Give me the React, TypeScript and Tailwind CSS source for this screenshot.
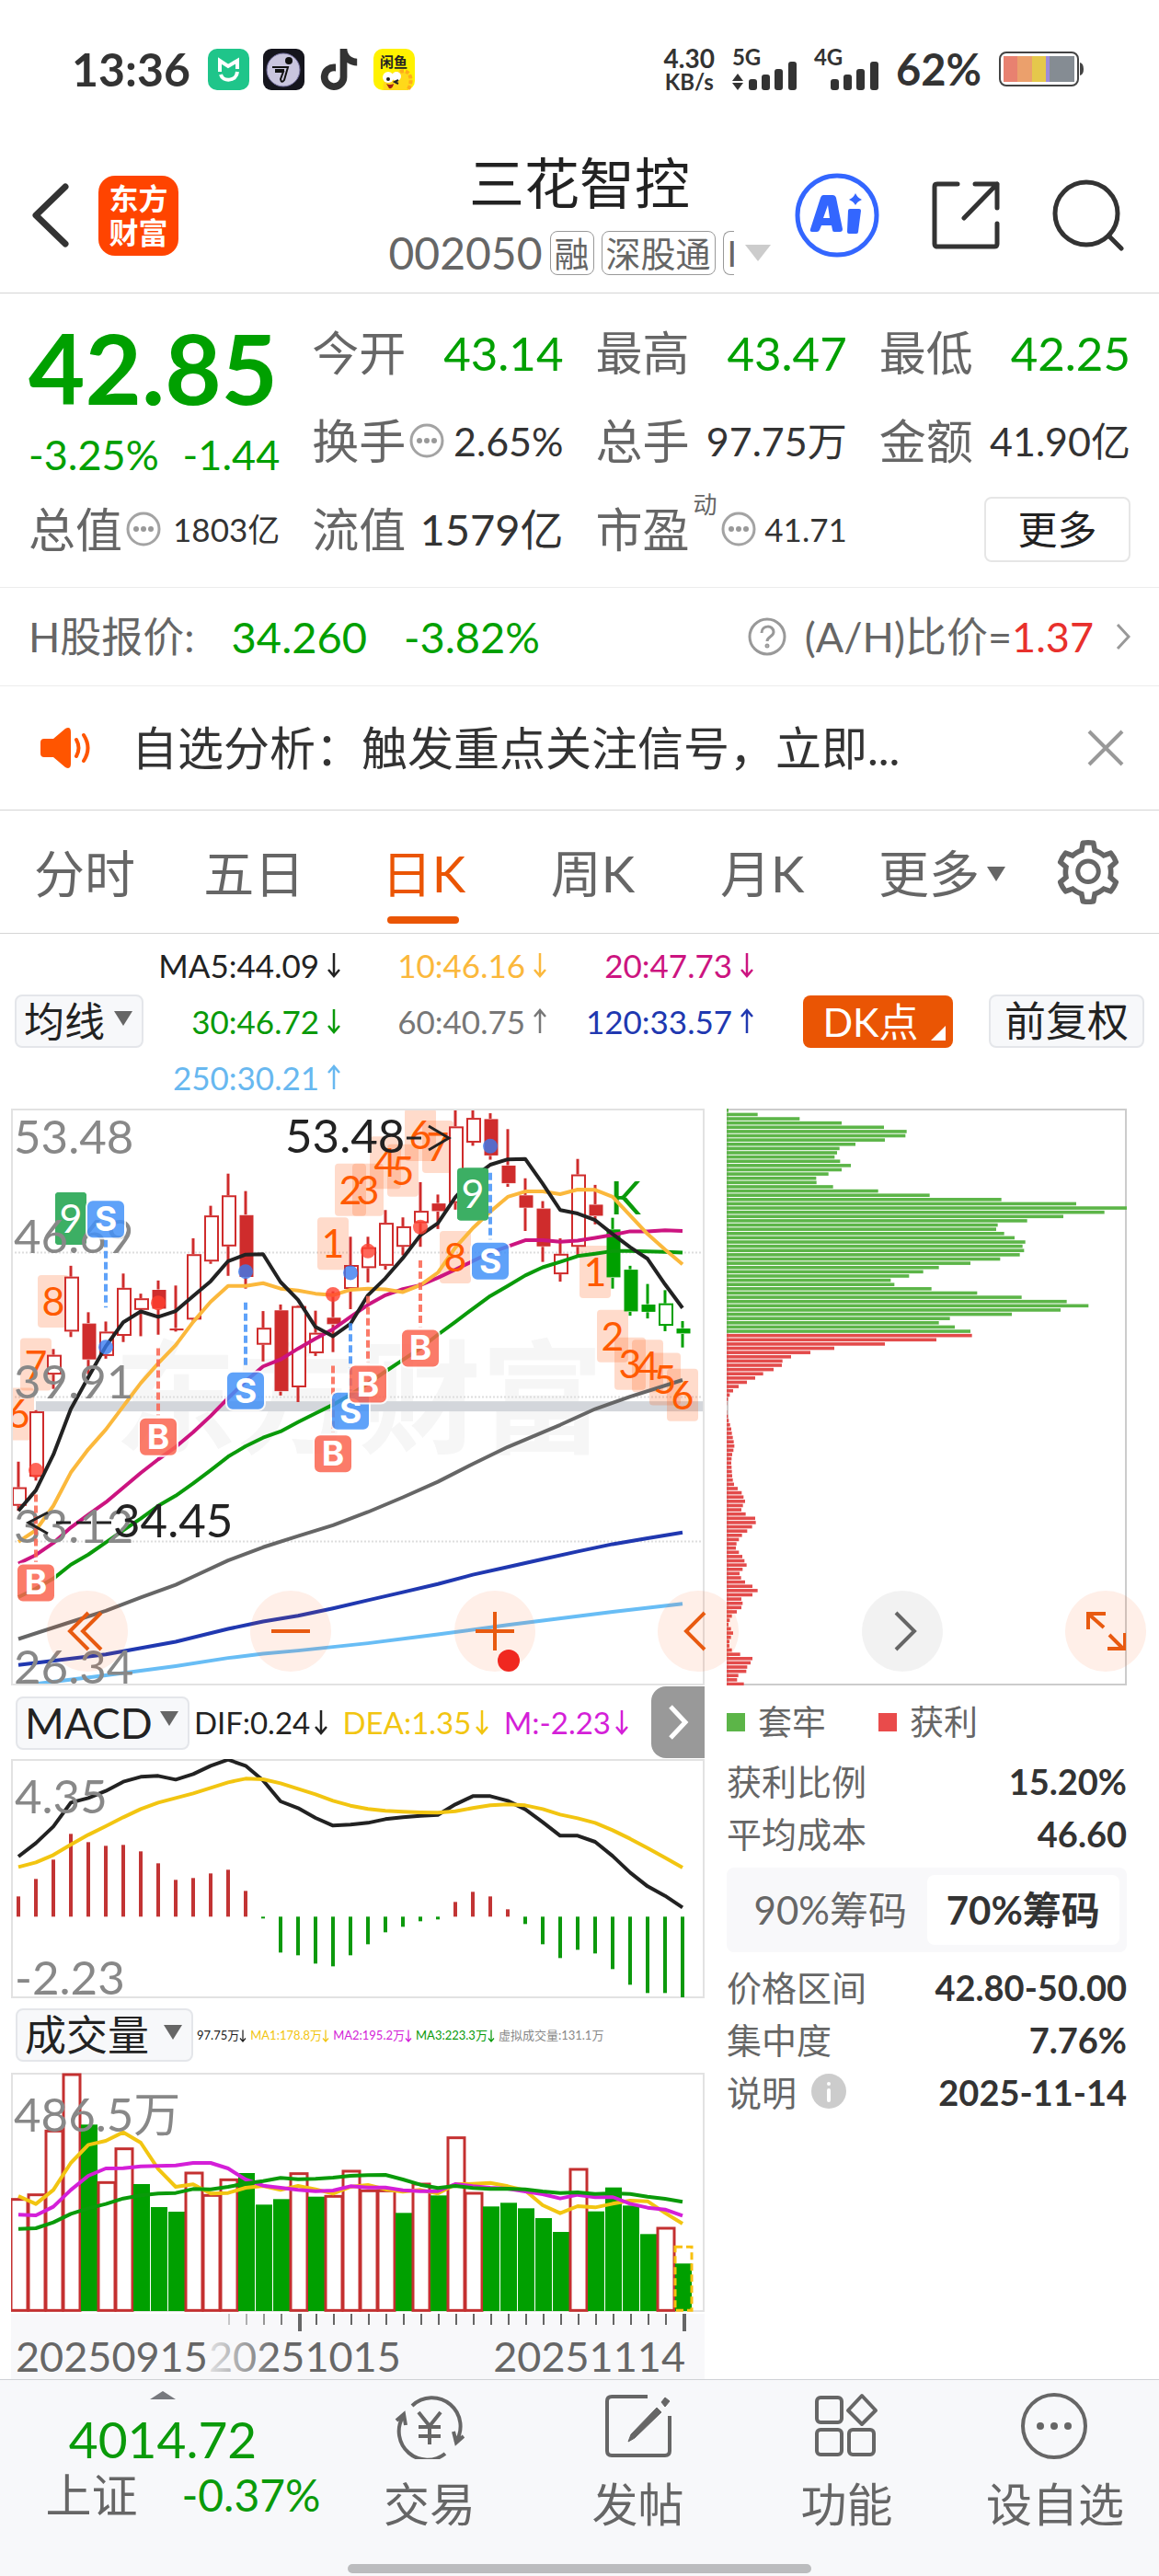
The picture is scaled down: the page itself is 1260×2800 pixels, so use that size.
import React, { useState } from 'react';
import { FaTiktok } from 'react-icons/fa';
import { AiOutlineSetting } from 'react-icons/ai';

// ---------- chart data ----------

const RED = '#cf2c2c';
const GREEN = '#00a000';
const STEP = 19;
const xAt = (i: number) => 8 + STEP * i;

// price levels are stored on a 36 (top) .. 1526 (bottom) scale
const py = (v: number) => ((v - 36) / 1490) * 627;
// indicator panels: three units for one pixel
const my = (v: number) => (v - 248) / 3;
const vy = (v: number) => (v - 218) / 3;

// [high, bodyTop, bodyBottom, low, kind]  u = rising, r = filled red, g = falling, h = hollow green
type Candle = [number, number, number, number, 'u' | 'r' | 'g' | 'h'];
const CANDLES: Candle[] = [
  [948, 1014, 1062, 1075, 'u'], [815, 818, 987, 997, 'u'], [657, 672, 723, 760, 'u'], [442, 470, 612, 626, 'u'],
  [562, 590, 685, 722, 'r'], [586, 612, 675, 682, 'u'], [462, 499, 623, 639, 'u'], [514, 526, 556, 624, 'u'],
  [480, 503, 554, 620, 'r'], [493, 603, 607, 612, 'r'], [371, 412, 581, 585, 'u'], [287, 312, 431, 437, 'u'],
  [204, 260, 392, 468, 'u'], [249, 310, 472, 501, 'r'], [559, 602, 646, 689, 'u'], [542, 556, 767, 777, 'r'],
  [544, 546, 756, 794, 'u'], [558, 615, 668, 675, 'u'], [508, 575, 594, 665, 'r'], [367, 440, 502, 554, 'u'],
  [367, 394, 448, 485, 'u'], [298, 331, 442, 452, 'u'], [317, 340, 393, 415, 'u'], [226, 300, 332, 393, 'u'],
  [258, 280, 302, 347, 'r'], [36, 82, 280, 297, 'u'], [40, 60, 124, 132, 'u'], [48, 62, 158, 168, 'r'],
  [89, 182, 230, 238, 'r'], [216, 259, 293, 352, 'r'], [275, 293, 393, 432, 'r'], [371, 411, 464, 483, 'u'],
  [166, 206, 393, 415, 'u'], [233, 283, 314, 335, 'r'], [318, 347, 473, 501, 'g'], [442, 451, 561, 571, 'g'],
  [489, 541, 562, 578, 'g'], [505, 539, 597, 611, 'h'], [585, 603, 618, 653, 'g'],
];

const MA5 = [1075, 1022, 930, 812, 730, 650, 588, 560, 574, 559, 520, 482, 430, 413, 412, 484, 530, 600, 624, 592, 518, 474, 422, 363, 332, 265, 215, 181, 167, 166, 230, 298, 307, 324, 360, 394, 424, 490, 551];
const MA10 = [1155, 1125, 1062, 976, 916, 865, 805, 745, 694, 647, 587, 535, 494, 494, 487, 501, 506, 514, 518, 504, 501, 503, 510, 492, 460, 395, 345, 302, 264, 250, 250, 257, 245, 246, 264, 312, 360, 400, 438];
const MA20 = [1211, 1189, 1158, 1118, 1085, 1053, 1015, 977, 942, 910, 872, 830, 784, 740, 702, 684, 656, 630, 606, 574, 543, 518, 502, 492, 473, 452, 430, 408, 392, 376, 376, 380, 377, 370, 362, 353, 353, 350, 352];
const MA30 = [1298, 1276, 1250, 1214, 1188, 1157, 1125, 1095, 1062, 1036, 1004, 970, 935, 908, 886, 870, 846, 823, 801, 775, 746, 715, 685, 655, 620, 587, 553, 520, 494, 467, 446, 432, 417, 411, 404, 404, 405, 406, 408];

// slow averages only need a few knots: [candle index, level]
const MA60 = [[0, 1406], [3, 1362], [5, 1333], [7, 1299], [9, 1266], [10, 1245], [12, 1203], [14, 1169], [16, 1140], [18, 1112], [20, 1078], [22, 1040], [24, 1000], [26, 954], [28, 910], [30, 872], [31, 853], [33, 812], [35, 780], [38, 737]];
const MA120 = [[0, 1473], [5, 1446], [9, 1413], [12, 1380], [14, 1361], [16, 1346], [18, 1327], [20, 1306], [22, 1285], [24, 1264], [26, 1240], [28, 1220], [30, 1200], [32, 1180], [34, 1161], [36, 1146], [38, 1131]];
const MA250 = [[0, 1526], [1, 1522], [5, 1500], [9, 1476], [12, 1455], [14, 1444], [16, 1436], [20, 1417], [24, 1394], [28, 1370], [32, 1347], [34, 1336], [38, 1315]];

// nine-turn counters: [candle index, top level, digit]
const TURNS = [[0, 757, 6], [1, 629, 7], [2, 466, 8], [3, 252, 9], [18, 317, 1], [19, 178, 2], [20, 178, 3], [21, 108, 4], [22, 128, 5], [23, 36, 6], [24, 67, 7], [25, 352, 8], [26, 189, 9], [33, 390, 1], [34, 556, 2], [35, 627, 3], [36, 633, 4], [37, 667, 5], [38, 708, 6]];

// trade marks: [side, candle index, badge centre, dash from, dash to, dot]
type Mark = ['B' | 'S', number, number, number, number, number];
const MARKS: Mark[] = [
  ['B', 1, 1261, 1033, 1207, 970], ['S', 5, 322, 375, 550, 652], ['B', 8, 884, 655, 828, 538],
  ['S', 13, 765, 537, 708, 457], ['B', 18, 928, 700, 872, 516], ['S', 19, 817, 590, 765, 460],
  ['B', 20, 748, 520, 692, 404], ['B', 23, 655, 428, 600, 342], ['S', 27, 430, 202, 374, 133],
];

const MACD = [696, 639, 576, 492, 519, 531, 528, 549, 588, 642, 636, 621, 609, 678, 768, 879, 888, 915, 924, 888, 852, 813, 795, 777, 771, 714, 681, 696, 738, 786, 852, 897, 870, 882, 933, 984, 1011, 1011, 1025];
const DIF = [566, 522, 468, 390, 375, 352, 322, 306, 303, 315, 297, 270, 250, 270, 318, 386, 408, 440, 465, 462, 456, 444, 438, 433, 430, 396, 369, 369, 384, 412, 454, 498, 498, 518, 564, 618, 663, 694, 732];
const DEA = [600, 585, 561, 527, 495, 467, 438, 411, 390, 375, 360, 342, 324, 312, 314, 327, 345, 363, 384, 400, 411, 417, 420, 422, 423, 418, 408, 399, 396, 399, 411, 429, 441, 456, 480, 508, 538, 570, 602];

const VOL = [628, 613, 405, 221, 387, 573, 463, 581, 656, 671, 542, 615, 564, 545, 648, 630, 544, 622, 618, 536, 600, 600, 675, 578, 618, 427, 608, 654, 642, 660, 692, 737, 530, 670, 592, 651, 744, 722, 840];
const VOL_UP = [0, 1, 2, 3, 5, 6, 10, 11, 12, 16, 18, 19, 20, 21, 23, 25, 26, 32, 37];
const VMA1 = [620, 646, 600, 512, 453, 440, 412, 446, 532, 590, 582, 612, 610, 593, 587, 600, 587, 598, 612, 590, 584, 598, 606, 600, 612, 582, 580, 577, 588, 602, 650, 676, 653, 657, 645, 635, 637, 675, 710];
const VMA2 = [681, 683, 655, 600, 554, 530, 529, 523, 522, 520, 512, 512, 530, 566, 586, 593, 600, 604, 602, 588, 592, 592, 601, 604, 604, 581, 588, 593, 596, 605, 614, 628, 616, 624, 623, 645, 658, 664, 684];
const VMA3 = [727, 725, 706, 678, 660, 646, 628, 618, 612, 610, 597, 598, 590, 579, 571, 561, 565, 564, 560, 554, 552, 551, 566, 583, 594, 587, 594, 597, 596, 598, 605, 610, 608, 613, 611, 613, 622, 629, 639];

// chip distribution, top price first, 1305 = full width
const CHIPS = [
  6, 101, 238, 375, 513, 587, 583, 516, 420, 368, 360, 352, 370, 405, 375, 332, 292, 293, 347, 494, 662, 896, 1140, 1305, 1232, 1098, 980, 884, 879, 905, 939, 974, 965, 970, 956, 892, 795, 692, 641, 595, 535, 547, 668, 817, 962, 1109, 1180, 1089, 930, 728, 692, 744, 795,
  800, 684, 516, 351, 273, 210, 182, 180, 153, 119, 93, 66, 39, 21, 10, 4, 1, 0, 1, 4, 7, 11, 15, 17, 20, 23, 25, 22, 18, 16, 15, 16, 17, 18, 20, 24, 36, 49, 55, 60, 53, 48, 62, 93, 95, 83, 67, 50, 40, 32, 30, 40, 51, 58, 65, 52, 42, 47, 60, 84, 101, 84, 48, 52, 48, 33, 17, 10, 6, 14, 21, 14, 9, 9, 17, 44, 84, 78, 67, 64, 38, 34, 56,
];
const CHIP_SPLIT = 53;

const linePoints = (values: number[], y: (v: number) => number) => values.map((v, i) => `${xAt(i)},${y(v)}`).join(' ');
const knotPoints = (knots: number[][]) => knots.map(([i, v]) => `${xAt(i)},${py(v)}`).join(' ');

// ---------- small pieces ----------

const Line = ({ points, color, width = 4 }: { points: string; color: string; width?: number }) => (
  <polyline points={points} fill="none" stroke={color} strokeWidth={width} strokeLinejoin="round" />
);

const Arrow = ({ up = false, className = 'h-7 w-4' }: { up?: boolean; className?: string }) => (
  <svg viewBox="0 0 16 28" className={`shrink-0 ${className}`} fill="none" stroke="currentColor" strokeWidth="2.5">
    {up ? <path d="M8 27V2M2 9l6-7 6 7" /> : <path d="M8 1v25M2 19l6 7 6-7" />}
  </svg>
);

const Dots = () => (
  <svg viewBox="0 0 38 38" className="size-[38px] shrink-0">
    <circle cx="19" cy="19" r="17" fill="none" stroke="#a3a3a3" strokeWidth="3" />
    {[11, 19, 27].map((x) => <circle key={x} cx={x} cy="19" r="3" fill="#999" />)}
  </svg>
);

const Caret = ({ className }: { className: string }) => (
  <svg viewBox="0 0 20 16" preserveAspectRatio="none" className={className}><path d="M0 0h20L10 16z" fill="currentColor" /></svg>
);

interface PickerProps {
  label: string;
  value: string;
  options: string[];
  className: string;
}

const Picker = ({ label, value, options, className }: PickerProps) => {
  const [picked, setPicked] = useState(value);
  return (
    <div className={`relative shrink-0 ${className}`}>
      <select
        aria-label={label}
        value={picked}
        onChange={(e) => setPicked(e.target.value)}
        className="h-[58px] w-full appearance-none rounded-lg border-2 border-[#e4e6ea] bg-[#f7f8fa] pl-2 leading-none text-[#222]"
      >
        {options.map((o) => <option key={o}>{o}</option>)}
      </select>
      <Caret className="pointer-events-none absolute top-[22px] right-3 h-4 w-5 text-[#666]" />
    </div>
  );
};

const SignalBars = ({ label, arrows }: { label: string; arrows?: boolean }) => (
  <div className="relative h-[46px] w-[70px]">
    <span className="absolute top-0 left-0 text-2xl leading-5 font-bold">{label}</span>
    <svg viewBox="0 0 70 46" className="size-full" fill="#333">
      {arrows && <path d="M0 36l6-8 6 8zM0 38l6 8 6-8z" />}
      <rect x="18" y="34" width="9" height="12" rx="3" />
      <rect x="32" y="29" width="9" height="17" rx="3" />
      <rect x="46" y="23" width="9" height="23" rx="3" />
      <rect x="61" y="15" width="9" height="31" rx="3" />
    </svg>
  </div>
);

// ---------- page sections ----------

const StatusBar = () => (
  <div className="flex h-[150px] items-center justify-between pr-[82px] pl-[78px] text-[#333]">
    <div className="flex items-center gap-[15px]">
      <span className="mr-1 text-[50px] leading-none font-bold">13:36</span>
      <svg viewBox="0 0 45 45" className="size-[45px]">
        <rect width="45" height="45" rx="10" fill="#1fc58a" />
        <path d="M13 25V13l9 6 10-6v9" fill="none" stroke="#fff" strokeWidth="4" />
        <path d="M14 28c2 8 17 8 18-3" fill="none" stroke="#fff" strokeWidth="4" />
      </svg>
      <svg viewBox="0 0 45 45" className="size-[45px]">
        <rect width="45" height="45" rx="9" fill="#15151d" />
        <circle cx="22" cy="23" r="18" fill="#c9c5de" stroke="#6f6a9a" />
        <circle cx="28" cy="13" r="4" fill="#111" />
        <path d="M10 20h17l-4 14q-3 4-4-1l3-8H13M13 23h10" fill="none" stroke="#111" strokeWidth="2" />
      </svg>
      <FaTiktok className="size-[45px]" />
      <svg viewBox="0 0 45 45" className="size-[45px]">
        <rect width="45" height="45" rx="10" fill="#fff200" />
        <path d="M11 45c-4-20 22-26 30-16 3 6 1 12-3 16z" fill="#ffd91a" />
        <path d="M29 25c10-4 15 8 9 19" fill="none" stroke="#ffac1a" strokeWidth="4" strokeDasharray="4 2" />
        <circle cx="16" cy="31" r="6" fill="#fff" /><circle cx="25" cy="30" r="5" fill="#fff" />
        <circle cx="16" cy="33" r="2" fill="#222" />
        <path d="M27 34l-4 2 4 2" fill="none" stroke="#222" strokeWidth="2" />
        <path d="M14 38q4 2 8 0-1 6-5 5z" fill="#a32114" />
        <text x="22" y="20" textAnchor="middle" className="text-[15px] font-bold" fill="#222">闲鱼</text>
      </svg>
    </div>
    <div className="flex items-center gap-[19px]">
      <div className="text-center text-[28px] leading-7 font-bold">
        <div>4.30</div>
        <div className="text-2xl leading-6">KB/s</div>
      </div>
      <SignalBars label="5G" arrows />
      <SignalBars label="4G" />
      <span className="text-[47px] leading-none font-bold">62%</span>
      <svg viewBox="0 0 92 40" className="h-10 w-[92px]">
        <rect x="1" y="2" width="85" height="36" rx="7" fill="#fff" stroke="#444" strokeWidth="2" />
        <rect x="5" y="6" width="17" height="28" fill="#e88170" />
        <rect x="20" y="6" width="17" height="28" fill="#eba06c" />
        <rect x="36" y="6" width="16" height="28" fill="#e5c84c" />
        <rect x="51" y="6" width="5" height="28" fill="#9c8bdc" />
        <rect x="55" y="6" width="27" height="28" fill="#858c93" />
        <path d="M88 13q4 1 4 7t-4 7z" fill="#444" />
      </svg>
    </div>
  </div>
);

const Header = () => (
  <header className="grid h-[169px] grid-cols-[1fr_auto_1fr] items-center border-b border-[#d5d5d5]">
    <div className="flex items-center gap-8 pl-[35px]">
      <button aria-label="返回">
        <svg viewBox="0 0 40 70" className="h-[70px] w-10" fill="none" stroke="#333" strokeWidth="7" strokeLinecap="round" strokeLinejoin="round">
          <path d="M36 4L4 35l32 31" />
        </svg>
      </button>
      <a href="#home" className="flex size-[87px] flex-col items-center justify-center rounded-[18px] bg-[#ff4400] text-[32px] leading-[37px] font-bold text-white">
        <span>东方</span>
        <span>财富</span>
      </a>
    </div>
    <div className="flex flex-col items-center gap-[22px]">
      <h1 className="text-[60px] leading-none text-[#222]">三花智控</h1>
      <div className="flex h-12 items-center gap-2 text-[#666]">
        <span className="text-[48px] leading-none">002050</span>
        <span className="flex h-12 items-center rounded-lg border border-[#999] px-1 text-[38px] leading-none">融</span>
        <span className="flex h-12 items-center rounded-lg border border-[#999] px-1 text-[38px] leading-none">深股通</span>
        <span className="flex h-12 w-3 items-center overflow-hidden rounded-l-lg border border-r-0 border-[#999] pl-1 text-[38px] leading-none">I</span>
        <Caret className="ml-1 h-[18px] w-7 text-[#ccc]" />
      </div>
    </div>
    <div className="flex items-center justify-end gap-14 pr-[38px]">
      <button aria-label="AI">
        <svg viewBox="0 0 92 94" className="h-[94px] w-[92px]" fill="#3366ff">
          <circle cx="46" cy="47" r="43" fill="none" stroke="#3366ff" strokeWidth="5" />
          <path fillRule="evenodd" d="M31 25h10q3 0 4 3l7 34q0 3-3 3h-6q-2 0-2-2l-1-5H29l-2 5q-1 2-3 2h-5q-3 0-2-3l11-34q1-3 3-3zM36 36l-5 14h7z" />
          <path d="M60 40h10q2 0 2 2l-3 23q0 2-2 2h-8q-2 0-2-2l1-23q0-2 2-2zM66 23q2 5 7 7-5 2-7 6-2-4-7-6 5-2 7-7z" />
        </svg>
      </button>
      <button aria-label="分享">
        <svg viewBox="0 0 76 76" className="size-[76px]" fill="none" stroke="#333" strokeWidth="5" strokeLinecap="round" strokeLinejoin="round">
          <path d="M29 4H7Q4 4 4 7v62q0 3 3 3h62q3 0 3-3V47M48 4h24v26M72 4L36 41" />
        </svg>
      </button>
      <button aria-label="搜索">
        <svg viewBox="0 0 78 78" className="size-[78px]" fill="none" stroke="#333" strokeWidth="5" strokeLinecap="round">
          <circle cx="37" cy="37" r="34" />
          <path d="M61 61l14 14" />
        </svg>
      </button>
    </div>
  </header>
);

interface QuoteProps {
  label: string;
  value: string;
  size: string;
  green?: boolean;
  dots?: boolean;
  sup?: string;
}

const Quote = ({ label, value, size, green, dots, sup }: QuoteProps) => (
  <div className="flex items-center whitespace-nowrap">
    <span className="text-[51px] leading-none text-[#666]">{label}</span>
    {sup && <span className="self-start pt-2 pl-1 text-[26px] leading-none text-[#666]">{sup}</span>}
    {dots && <span className="pl-1"><Dots /></span>}
    <span className={`ml-auto leading-none ${size} ${green ? 'text-[#00a000]' : 'text-[#333]'}`}>{value}</span>
  </div>
);

const Quotes = () => (
  <section className="grid auto-rows-[96px] grid-cols-4 gap-x-[35px] border-b border-[#ececec] px-[31px] pt-4 pb-[15px]">
    <div className="row-span-2 flex flex-col justify-center gap-5 text-[#00a000]">
      <span className="text-[106px] leading-none font-bold">42.85</span>
      <div className="flex justify-between text-[45px] leading-none">
        <span>-3.25%</span>
        <span>-1.44</span>
      </div>
    </div>
    <Quote label="今开" value="43.14" size="text-[51px]" green />
    <Quote label="最高" value="43.47" size="text-[51px]" green />
    <Quote label="最低" value="42.25" size="text-[51px]" green />
    <Quote label="换手" value="2.65%" size="text-[43px]" dots />
    <Quote label="总手" value="97.75万" size="text-[43px]" />
    <Quote label="金额" value="41.90亿" size="text-[43px]" />
    <Quote label="总值" value="1803亿" size="text-[35px]" dots />
    <Quote label="流值" value="1579亿" size="text-[47px]" />
    <Quote label="市盈" value="41.71" size="text-[35px]" dots sup="动" />
    <div className="flex items-center justify-end">
      <button className="h-[71px] w-[159px] rounded-lg border-2 border-[#e6e6e6] text-[43px] leading-none text-[#222]">更多</button>
    </div>
  </section>
);

const HShare = () => (
  <section className="flex h-[107px] items-center border-b border-[#ececec] px-[31px] text-[45px] leading-none whitespace-nowrap text-[#666]">
    <span>H股报价:</span>
    <span className="ml-10 text-[47px] text-[#00a000]">34.260</span>
    <span className="ml-10 text-[47px] text-[#00a000]">-3.82%</span>
    <svg viewBox="0 0 42 42" className="mr-5 ml-auto size-[42px]" fill="none" stroke="#999" strokeWidth="3">
      <circle cx="21" cy="21" r="19" />
      <path d="M15 17c0-9 13-9 13-1 0 5-7 5-7 10" />
      <circle cx="21" cy="31" r="1" />
    </svg>
    <a href="#ah">(A/H)比价=<span className="text-[#e8302c]">1.37</span></a>
    <svg viewBox="0 0 16 30" className="ml-6 h-[30px] w-4" fill="none" stroke="#999" strokeWidth="3"><path d="M2 2l12 13L2 28" /></svg>
  </section>
);

const Notice = () => (
  <section className="flex h-[135px] items-center border-b border-[#d5d5d5] pr-[38px] pl-[44px]">
    <svg viewBox="0 0 56 46" className="h-[46px] w-14" fill="#ff5500">
      <path d="M4 13h10L27 2q6-3 6 4v34q0 7-6 4L14 33H4q-4 0-4-4V17q0-4 4-4z" />
      <path d="M39 14q5 9 0 18M47 9q9 14 0 28" fill="none" stroke="#ff5500" strokeWidth="4" strokeLinecap="round" />
    </svg>
    <p className="ml-[43px] flex-1 truncate text-[50px] leading-[64px] text-[#333]">自选分析：触发重点关注信号，立即...</p>
    <button aria-label="关闭">
      <svg viewBox="0 0 40 40" className="size-10" fill="none" stroke="#999" strokeWidth="4"><path d="M2 2l36 36M38 2L2 38" /></svg>
    </button>
  </section>
);

const TABS = ['分时', '五日', '日K', '周K', '月K'];

const Tabs = () => {
  const [tab, setTab] = useState('日K');
  return (
    <nav className="flex h-[134px] items-center border-b border-[#d5d5d5] pr-[37px] text-[55px] leading-none text-[#666]">
      <div className="grid h-full flex-1 grid-cols-[repeat(5,184fr)_206fr]">
        {TABS.map((t) => (
          <button key={t} onClick={() => setTab(t)} className={`relative h-full pt-1 ${t === tab ? 'text-[#ea5504]' : ''}`}>
            {t}
            {t === tab && <span className="absolute inset-x-[53px] bottom-2.5 h-2 rounded bg-[#ea5504]" />}
          </button>
        ))}
        <button className="flex h-full items-center justify-center gap-2 pt-1">
          更多
          <Caret className="h-4 w-5" />
        </button>
      </div>
      <button aria-label="设置" className="ml-4"><AiOutlineSetting className="size-20" /></button>
    </nav>
  );
};

const AVERAGES = [
  { text: 'MA5:44.09', color: 'text-[#222]' },
  { text: '10:46.16', color: 'text-[#fbb83c]' },
  { text: '20:47.73', color: 'text-[#cc1480]' },
  { text: '30:46.72', color: 'text-[#0a9a0a]' },
  { text: '60:40.75', color: 'text-[#777]', up: true },
  { text: '120:33.57', color: 'text-[#2038b0]', up: true },
  { text: '250:30.21', color: 'text-[#68b8f0]', up: true },
];

const Averages = () => (
  <section className="flex h-[190px] items-center pr-4 pl-4">
    <Picker label="主图指标" value="均线" options={['均线', 'BOLL']} className="w-[140px] text-[44px]" />
    <div className="grid flex-1 auto-rows-[61px] grid-cols-[215px_224px_225px] text-[35px] leading-none">
      {AVERAGES.map((a) => (
        <span key={a.text} className={`flex items-center justify-end gap-2 ${a.color}`}>
          {a.text}
          <Arrow up={a.up} />
        </span>
      ))}
    </div>
    <button className="relative h-[57px] w-[163px] rounded-lg bg-[#ea5504] pr-4 text-[43px] leading-none text-white">
      DK点
      <svg viewBox="0 0 16 16" className="absolute right-2 bottom-2 size-4"><path d="M16 0v16H0z" fill="#fff" /></svg>
    </button>
    <button className="ml-[39px] h-[58px] w-[169px] rounded-lg border-2 border-[#e4e6ea] bg-[#f7f8fa] text-[45px] leading-none text-[#222]">前复权</button>
  </section>
);

const PriceChart = () => (
  <svg viewBox="0 0 754 627" className="block h-auto w-full overflow-hidden">
    <text x="112" y="364" className="text-[133px] font-bold" fill="#f6f6f6">东方财富</text>
    {[408, 781, 1154].map((v) => <line key={v} x1="0" x2="754" y1={py(v)} y2={py(v)} stroke="#ddd" strokeWidth="2" strokeDasharray="2 2" />)}
    <rect x="27" y={py(792)} width="727" height="11" fill="#d3d6db" />

    {TURNS.map(([i, top, n]) => (
      <rect key={i} x={xAt(i) - 17} y={py(top)} width="34" height="57" rx="4" fill={n === 9 ? '#3caf64' : '#ff5a14'} fillOpacity={n === 9 ? 1 : 0.22} />
    ))}

    {CANDLES.map(([high, top, bottom, low, kind], i) => {
      const color = kind === 'g' || kind === 'h' ? GREEN : RED;
      const hollow = kind === 'u' || kind === 'h';
      return (
        <g key={i} stroke={color} strokeWidth="3">
          <line x1={xAt(i)} x2={xAt(i)} y1={py(high)} y2={py(top)} />
          <line x1={xAt(i)} x2={xAt(i)} y1={py(bottom)} y2={py(low)} />
          <rect x={xAt(i) - 6} y={py(top) + 1} width="14" height={Math.max(py(bottom) - py(top) - 2, 1)} fill={hollow ? '#fff' : color} strokeWidth={hollow ? 2 : 1} />
        </g>
      );
    })}

    <text x="651" y={py(310)} fill="#0a9a0a" className="text-[51px]">K</text>

    <Line points={knotPoints(MA250)} color="#68bdf5" />
    <Line points={knotPoints(MA120)} color="#2038b0" />
    <Line points={knotPoints(MA60)} color="#666" />
    <Line points={linePoints(MA30, py)} color="#0a9a0a" />
    <Line points={linePoints(MA20, py)} color="#cc1480" />
    <Line points={linePoints(MA10, py)} color="#fbb83c" />
    <Line points={linePoints(MA5, py)} color="#222" />

    {TURNS.map(([i, top, n]) => (
      <g key={i}>
        {n === 9 && <rect x={xAt(i) - 17} y={py(top)} width="34" height="57" rx="4" fill="#3caf64" />}
        <text x={xAt(i)} y={py(top) + 44} textAnchor="middle" fill={n === 9 ? '#fff' : '#ff5a00'} className="text-[43px]">{n}</text>
      </g>
    ))}

    {/* price scale sits above the curves, below the trade marks */}
    <g fill="#888" className="text-[51px]">
      <text x="3" y="49">53.48</text>
      <text x="3" y="157">46.69</text>
      <text x="3" y="315">39.91</text>
      <text x="3" y="472">33.12</text>
      <text x="3" y="625">26.34</text>
    </g>

    {MARKS.map(([side, i, at, from, to, dot]) => {
      const color = side === 'B' ? '#fb6450' : '#4492f8';
      return (
        <g key={i}>
          <line x1={xAt(i)} x2={xAt(i)} y1={py(from)} y2={py(to)} stroke={color} strokeWidth="4" strokeDasharray="8 4" opacity="0.85" />
          <circle cx={xAt(i)} cy={py(dot)} r="8" fill={side === 'B' ? '#ff4030' : '#3a7cf0'} opacity="0.8" />
          <rect x={xAt(i) - 21} y={py(at) - 21} width="42" height="42" rx="7" fill={color} stroke="#fff" strokeWidth="2" opacity="0.85" />
          <text x={xAt(i)} y={py(at) + 13} textAnchor="middle" fill="#fff" className="font-[Inter,sans-serif] text-[37px] font-bold">{side}</text>
        </g>
      );
    })}

    <g fill="#222" className="text-[51px]">
      <text x="298" y="48">53.48</text>
      <text x="111" y="466">34.45</text>
    </g>
    <g fill="none" stroke="#222" strokeWidth="3">
      <path d="M430 32h16M454 19l22 13-22 13" />
      <path d="M40 439l-21 11 21 12M49 450h16M71 450h16M93 450h16" />
    </g>
    <rect x="1" y="1" width="752" height="625" fill="none" stroke="#e2e2e2" strokeWidth="2" />
  </svg>
);

const MacdChart = () => (
  <svg viewBox="0 0 754 260" className="block h-auto w-full">
    <rect x="1" y="1" width="752" height="258" fill="none" stroke="#e2e2e2" strokeWidth="2" />
    {MACD.map((v, i) => (
      <line key={i} x1={xAt(i)} x2={xAt(i)} y1={my(762)} y2={my(v)} stroke={v < 762 ? '#c23434' : '#0c990c'} strokeWidth="4" />
    ))}
    <Line points={linePoints(DIF, my)} color="#222" />
    <Line points={linePoints(DEA, my)} color="#f2c511" />
    <g fill="#888" className="text-[51px]">
      <text x="4" y="59">4.35</text>
      <text x="4" y="256">-2.23</text>
    </g>
  </svg>
);

const VolumeChart = () => (
  <svg viewBox="0 0 754 260" className="block h-auto w-full">
    <rect x="1" y="1" width="752" height="258" fill="none" stroke="#e2e2e2" strokeWidth="2" />
    {VOL.map((v, i) =>
      VOL_UP.includes(i) ? (
        <rect key={i} x={xAt(i) - 8} y={vy(v) + 1} width="18" height={vy(993) - vy(v) - 1} fill="#fff" stroke="#c43030" strokeWidth="3" />
      ) : (
        <rect key={i} x={xAt(i) - 8} y={vy(v)} width="18" height={vy(995) - vy(v)} fill={GREEN} />
      )
    )}
    <rect x={xAt(38) - 8} y={vy(786)} width="18" height={vy(993) - vy(786)} fill="none" stroke="#f8c010" strokeWidth="3" strokeDasharray="8 4" />
    <Line points={linePoints(VMA1, vy)} color="#f2c511" />
    <Line points={linePoints(VMA2, vy)} color="#d41fd8" />
    <Line points={linePoints(VMA3, vy)} color="#0a9a0a" />
    <text x="3" y="64" fill="#888" className="text-[51px]">486.5万</text>
  </svg>
);

const DateAxis = () => (
  <svg viewBox="0 0 754 71" className="mt-[2px] block h-auto w-full bg-[#f8f8fa]">
    <defs>
      <linearGradient id="fade" gradientUnits="userSpaceOnUse" x1="210" x2="290" y1="0" y2="0">
        <stop offset="0" stopColor="#666" stopOpacity="0.1" />
        <stop offset="1" stopColor="#666" />
      </linearGradient>
    </defs>
    {CANDLES.map((_, i) => {
      const major = i === 16 || i === 38;
      return i < 12 ? null : (
        <rect key={i} x={xAt(i)} y="0" width={major ? 4 : 2} height={major ? 19 : 12} fill="#666" opacity={Math.min(1, (i - 10) / 6)} />
      );
    })}
    <g fill="#666" className="text-[45px]">
      <text x="5" y="63">20250915</text>
      <text x="215" y="63" fill="url(#fade)">20251015</text>
      <text x="733" y="63" textAnchor="end">20251114</text>
    </g>
  </svg>
);

const ChipChart = () => (
  <svg viewBox="0 0 435 627" className="block h-auto w-full">
    <rect x="1" y="1" width="433" height="625" fill="none" stroke="#ccc" strokeWidth="2" />
    {CHIPS.map((v, i) => (
      <rect key={i} x="0" y={i * 4.62} width={v / 3} height="3.6" fill={i < CHIP_SPLIT ? '#5cb548' : '#e34b4b'} />
    ))}
  </svg>
);

const Round = ({ label, gray, children }: { label: string; gray?: boolean; children: React.ReactNode }) => (
  <button aria-label={label} className={`relative flex size-[88px] items-center justify-center rounded-full ${gray ? 'bg-black/5 text-[#666]' : 'bg-[#ff5a14]/10 text-[#e85a10]'}`}>
    <svg viewBox="0 0 44 44" className="size-11" fill="none" stroke="currentColor" strokeWidth="4">{children}</svg>
  </button>
);

const ChartControls = () => (
  <div className="absolute inset-x-0 bottom-[15px] flex justify-between pr-[14px] pl-[51px]">
    <Round label="最早"><path d="M23 2L3 22l20 20M37 2L17 22l20 20" /></Round>
    <Round label="缩小"><path d="M1 22h42" /></Round>
    <div className="relative">
      <Round label="放大"><path d="M1 22h42M22 1v42" /></Round>
      <span className="absolute right-[17px] bottom-0 size-6 rounded-full bg-[#f02820]" />
    </div>
    <Round label="左移"><path d="M29 2L9 22l20 20" /></Round>
    <Round label="右移" gray><path d="M15 2l20 20-20 20" /></Round>
    <Round label="全屏"><path d="M3 20V3h19M3 3l17 15M26 26l15 15M43 24v17H24" /></Round>
  </div>
);

const MacdHeader = () => (
  <div className="flex h-[80px] items-center pl-[5px] text-[#222]">
    <Picker label="副图指标" value="MACD" options={['MACD', 'KDJ', 'RSI']} className="w-[189px] text-[46px]" />
    <div className="flex min-w-0 flex-1 items-center justify-between pr-6 pl-[5px] text-[33px] leading-none whitespace-nowrap">
      <span className="flex items-center gap-1">DIF:0.24<Arrow className="h-9 w-4" /></span>
      <span className="flex items-center gap-1 text-[#f2c511]">DEA:1.35<Arrow className="h-9 w-4" /></span>
      <span className="flex items-center gap-1 text-[#d41fd8]">M:-2.23<Arrow className="h-9 w-4" /></span>
    </div>
    <button aria-label="更多指标" className="flex h-[78px] w-[58px] shrink-0 items-center justify-center rounded-l-2xl bg-[#999]">
      <svg viewBox="0 0 24 38" className="h-[38px] w-6" fill="none" stroke="#fff" strokeWidth="5"><path d="M4 2l16 17L4 36" /></svg>
    </button>
  </div>
);

const VolumeHeader = () => (
  <div className="flex h-[81px] items-center pl-[5px] text-[#222]">
    <Picker label="成交量指标" value="成交量" options={['成交量', '成交额']} className="w-[193px] text-[45px]" />
    <div className="flex items-center gap-1 pl-1 text-[13px] leading-none whitespace-nowrap">
      <span className="flex items-center">97.75万<Arrow className="h-4 w-2" /></span>
      <span className="flex items-center text-[#f2c511]">MA1:178.8万<Arrow className="h-4 w-2" /></span>
      <span className="flex items-center text-[#d41fd8]">MA2:195.2万<Arrow className="h-4 w-2" /></span>
      <span className="flex items-center text-[#0a9a0a]">MA3:223.3万<Arrow className="h-4 w-2" /></span>
      <span className="text-[#888]">虚拟成交量:131.1万</span>
    </div>
  </div>
);

const Row = ({ label, value, info }: { label: string; value: string; info?: boolean }) => (
  <div className="flex h-[57px] items-center text-[38px] leading-none whitespace-nowrap">
    <dt className="flex items-center gap-4 text-[#666]">
      {label}
      {info && (
        <svg viewBox="0 0 39 39" className="size-[39px]">
          <circle cx="19" cy="19" r="19" fill="#ccc" />
          <path d="M19 18v11" stroke="#fff" strokeWidth="4" strokeLinecap="round" />
          <circle cx="19" cy="11" r="2" fill="#fff" />
        </svg>
      )}
    </dt>
    <dd className="ml-auto font-bold text-[#333]">{value}</dd>
  </div>
);

const ChipPanel = () => {
  const [range, setRange] = useState(70);
  return (
    <div>
      <div className="flex h-[75px] items-center pt-1 text-[37px] leading-none text-[#666]">
        <span className="mr-[14px] size-5 bg-[#5cb548]" />套牢
        <span className="mr-[14px] ml-[57px] size-5 bg-[#e94b4b]" />获利
      </div>
      <dl>
        <Row label="获利比例" value="15.20%" />
        <Row label="平均成本" value="46.60" />
      </dl>
      <div className="my-[9px] grid h-[92px] grid-cols-2 rounded-lg bg-[#f8f8fa] p-2 text-[42px] leading-none">
        {[90, 70].map((n) => (
          <button key={n} onClick={() => setRange(n)} className={n === range ? 'rounded-lg bg-white font-bold text-[#333]' : 'text-[#666]'}>{n}%筹码</button>
        ))}
      </div>
      <dl>
        <Row label="价格区间" value="42.80-50.00" />
        <Row label="集中度" value="7.76%" />
        <Row label="说明" value="2025-11-14" info />
      </dl>
    </div>
  );
};

const NAV = [
  {
    label: '交易',
    icon: (
      <>
        <path d="M19 14a31 31 0 0 1 47 40M9 26a31 31 0 0 0 46 40M2 30l8-7 2 12M75 47l-8 7-3-12" />
        <path d="M26 21l12 15 12-15M38 36v20M26 37h24M26 47h24" strokeWidth="4" />
      </>
    ),
  },
  {
    label: '发帖',
    icon: (
      <>
        <path d="M48 4H9Q4 4 4 9v54q0 5 5 5h58q5 0 5-5V25" />
        <path d="M58 16L30 45l-3 8 7-4 29-28zM63 10l4-5 5 4-5 6z" fill="currentColor" strokeWidth="1" />
      </>
    ),
  },
  {
    label: '功能',
    icon: (
      <>
        <rect x="5" y="5" width="27" height="27" rx="4" />
        <rect x="5" y="40" width="27" height="27" rx="4" />
        <rect x="40" y="40" width="27" height="27" rx="4" />
        <path d="M54 3l15 16-15 15-15-15z" strokeLinejoin="round" />
      </>
    ),
  },
  {
    label: '设自选',
    icon: (
      <>
        <circle cx="37" cy="36" r="34" />
        <g fill="currentColor" stroke="none"><circle cx="22" cy="36" r="4" /><circle cx="37" cy="36" r="4" /><circle cx="52" cy="36" r="4" /></g>
      </>
    ),
  },
];

const BottomBar = () => (
  <footer className="border-t border-[#d0d2d6] bg-[#f7f8fa] text-[#666]">
    <div className="grid h-[200px] grid-cols-[354fr_226fr_227fr_227fr_226fr]">
      <a href="#index" className="flex flex-col items-center pt-3 leading-none whitespace-nowrap text-[#0a9a0a]">
        <Caret className="h-[9px] w-7 rotate-180 text-[#77797e]" />
        <span className="mt-4 text-[55px]">4014.72</span>
        <span className="mt-2 flex items-center gap-12 pl-11 text-[48px]">
          <span className="text-[50px] text-[#666]">上证</span>-0.37%
        </span>
      </a>
      {NAV.map((n) => (
        <a key={n.label} href="#nav" className="flex flex-col items-center pt-[14px]">
          <svg viewBox="0 0 76 72" className="h-[72px] w-[76px]" fill="none" stroke="currentColor" strokeWidth="4">{n.icon}</svg>
          <span className="mt-6 text-[50px] leading-none">{n.label}</span>
        </a>
      ))}
    </div>
    <div className="mx-auto h-[10px] w-[504px] rounded-full bg-[#bbbcbe]" />
    <div className="h-1" />
  </footer>
);

export default function App() {
  return (
    <main className="min-h-screen bg-white font-[Lato,'Noto_Sans_CJK_SC',sans-serif]">
      <StatusBar />
      <Header />
      <Quotes />
      <HShare />
      <Notice />
      <Tabs />
      <Averages />
      <div className="relative">
        <div className="grid grid-cols-[minmax(0,754fr)_minmax(0,435fr)] gap-6 pr-[35px] pl-3">
          <PriceChart />
          <ChipChart />
        </div>
        <ChartControls />
      </div>
      <div className="grid grid-cols-[minmax(0,754fr)_minmax(0,435fr)] gap-6 pr-[35px] pl-3">
        <div>
          <MacdHeader />
          <MacdChart />
          <VolumeHeader />
          <VolumeChart />
          <DateAxis />
        </div>
        <ChipPanel />
      </div>
      <BottomBar />
    </main>
  );
}
